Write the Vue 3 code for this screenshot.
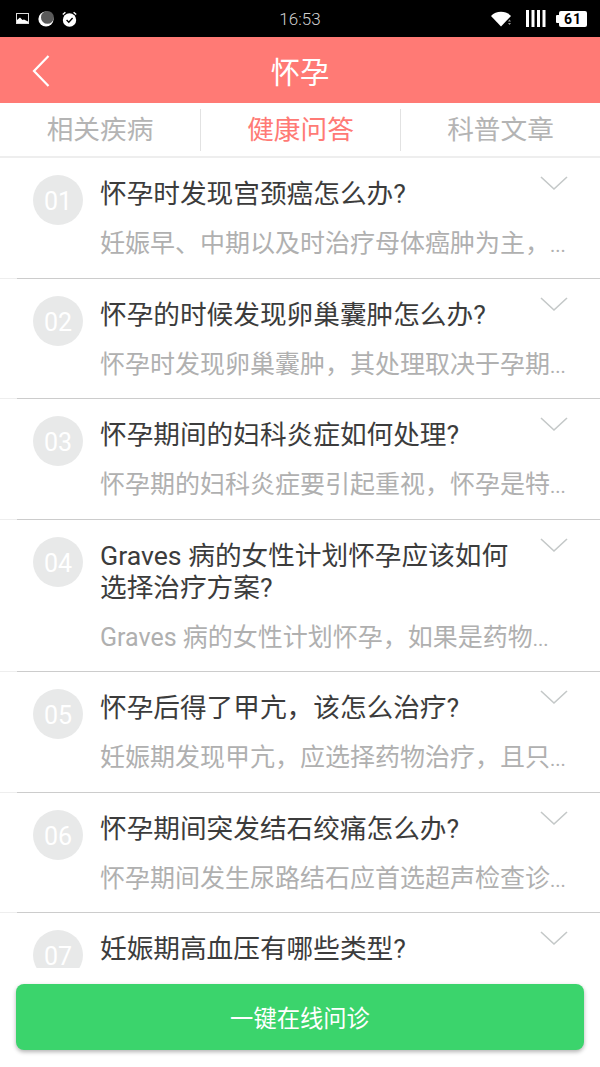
<script setup>
const tabs = [
  { name: '相关疾病', active: false },
  { name: '健康问答', active: true },
  { name: '科普文章', active: false }
]

// 07 has no summary: it sits behind the button in the screenshot
const questions = [
  { no: '01', title: '怀孕时发现宫颈癌怎么办?', desc: '妊娠早、中期以及时治疗母体癌肿为主，' },
  { no: '02', title: '怀孕的时候发现卵巢囊肿怎么办?', desc: '怀孕时发现卵巢囊肿，其处理取决于孕期' },
  { no: '03', title: '怀孕期间的妇科炎症如何处理?', desc: '怀孕期的妇科炎症要引起重视，怀孕是特' },
  { no: '04', title: 'Graves 病的女性计划怀孕应该如何选择治疗方案?', desc: 'Graves 病的女性计划怀孕，如果是药物' },
  { no: '05', title: '怀孕后得了甲亢，该怎么治疗?', desc: '妊娠期发现甲亢，应选择药物治疗，且只' },
  { no: '06', title: '怀孕期间突发结石绞痛怎么办?', desc: '怀孕期间发生尿路结石应首选超声检查诊' },
  { no: '07', title: '妊娠期高血压有哪些类型?', desc: '' }
]
</script>

<template>
  <div class="page">
    <div class="status">
      <div class="status-left">
        <svg width="14" height="12" viewBox="0 0 14 12">
          <rect x="0.5" y="0.5" width="12" height="10" fill="none" stroke="#ddd" />
          <path d="M1 10 L1 7 L4 4.500 L6.500 7 L8 6.500 L12 8.500 V10 Z" fill="#fff" />
        </svg>
        <svg width="16" height="16" viewBox="0 0 16 16">
          <circle cx="8" cy="8" r="7.600" fill="#fff" />
          <circle cx="9.400" cy="6.400" r="6.400" fill="#5a5a5a" />
        </svg>
        <svg width="15" height="16" viewBox="0 0 15 16">
          <circle cx="7.500" cy="9" r="6.700" fill="#fff" />
          <path d="M4.600 9 L6.800 11.200 L10.600 7" fill="none" stroke="#000" stroke-width="1.400" />
          <path d="M0.800 3.600 L3.400 1.200 M14.200 3.600 L11.600 1.200" stroke="#fff" stroke-width="1.400" />
        </svg>
      </div>
      <span class="time">16:53</span>
      <div class="status-right">
        <svg width="22" height="16" viewBox="0 0 22 16">
          <path d="M0 5 A14 14 0 0 1 20 5 L10 15.500 Z" fill="#fff" />
          <path d="M17 10.500h3l-1.500-2zM17 12h3l-1.500 2z" fill="#999" />
        </svg>
        <svg width="20" height="17" viewBox="0 0 20 17">
          <path d="M0 0h3v17H0zM5.500 0h3v17h-3zM11 0h3v17h-3zM16.500 0h3v17h-3z" fill="#fff" />
        </svg>
        <div class="battery"><span>61</span></div>
      </div>
    </div>

    <header class="top">
      <svg class="back" width="18" height="32" viewBox="0 0 18 32">
        <path d="M16.500 1 L2 16 L16.500 31" fill="none" stroke="#fff" stroke-width="2.200" />
      </svg>
      <h1>怀孕</h1>
    </header>

    <nav class="tabs">
      <div v-for="tab in tabs" :key="tab.name" class="tab" :class="{ active: tab.active }">{{ tab.name }}</div>
    </nav>

    <div class="list">
      <div v-for="q in questions" :key="q.no" class="item">
        <div class="num">{{ q.no }}</div>
        <div class="body">
          <div class="title">{{ q.title }}</div>
          <div v-if="q.desc" class="desc">{{ q.desc }}<span class="more">...</span></div>
        </div>
        <svg class="arrow" width="28" height="15" viewBox="0 0 28 15">
          <path d="M1 1 L14 13 L27 1" fill="none" stroke="#c4c8c8" stroke-width="1.600" />
        </svg>
      </div>
    </div>

    <div class="footer">
      <button class="ask">一键在线问诊</button>
    </div>
  </div>
</template>

<style>
html, body {
  margin: 0;
  background: #fff;
}
</style>

<style scoped>
.page {
  width: 600px;
  height: 1067px;
  display: flex;
  flex-direction: column;
  overflow: hidden;
  background: #fff;
  font-family: Roboto, "Noto Sans CJK SC", sans-serif;
}

.status {
  height: 37px;
  flex: none;
  background: #000;
  display: flex;
  align-items: center;
  justify-content: space-between;
  padding: 0 13px 0 16px;
  position: relative;
}
.status-left, .status-right {
  display: flex;
  align-items: center;
}
.status-left {
  gap: 8px;
}
.status-right {
  gap: 13px;
}
.time {
  position: absolute;
  left: 0;
  right: 0;
  text-align: center;
  color: #d0d0d0;
  font-size: 17px;
  font-weight: 300;
}
.battery {
  width: 28px;
  height: 16px;
  background: #fff;
  border-radius: 2px;
  position: relative;
  display: flex;
  align-items: center;
  justify-content: center;
}
.battery::before {
  content: "";
  position: absolute;
  left: -3px;
  top: 4px;
  width: 3px;
  height: 8px;
  background: #fff;
  border-radius: 1px 0 0 1px;
}
.battery span {
  color: #000;
  font-size: 14px;
  font-weight: 700;
  letter-spacing: 1px;
}

.top {
  height: 66px;
  flex: none;
  background: #ff7a75;
  display: flex;
  align-items: center;
  justify-content: center;
  position: relative;
}
.top h1 {
  margin: 0;
  color: #fff;
  font-size: 29.330px;
  font-weight: 400;
}
.back {
  position: absolute;
  left: 32px;
  top: 18px;
}

.tabs {
  height: 54px;
  flex: none;
  margin-top: 1px;
  box-sizing: border-box;
  display: grid;
  grid-template-columns: repeat(3, 1fr);
  align-items: center;
  border-bottom: 2px solid #eeeeee;
}
.tab {
  height: 42px;
  margin-top: -1px;
  line-height: 43px;
  text-align: center;
  font-size: 26.670px;
  color: #b4b4b4;
  border-left: 1px solid #e2e2e2;
}
.tab:first-child {
  border-left: none;
}
.tab.active {
  color: #ff7a75;
}

.list {
  flex: 1;
  overflow: hidden;
}
.item {
  position: relative;
  padding: 17px 0 16.4px 33px;
  min-height: 120.4px;
  box-sizing: border-box;
  display: flex;
  gap: 17px;
  border-bottom: 1px solid #eeeeee;
}
.item:first-child {
  padding-bottom: 17px;
  min-height: 121px;
}
.item::after {
  content: "";
  position: absolute;
  left: 17px;
  right: 0;
  bottom: -1px;
  height: 1px;
  background: #cccccc;
}
.num {
  width: 50px;
  height: 50px;
  flex: none;
  border-radius: 50%;
  background: #e8e9e9;
  color: #fff;
  font-size: 25px;
  line-height: 53px;
  text-align: center;
}
.body {
  flex: 1;
  min-width: 0;
  padding-right: 34px;
}
.title {
  padding-right: 50px;
  margin-top: 3px;
  color: #3c3c3c;
  font-size: 26.670px;
  line-height: 32px;
}
.desc {
  height: 34px;
  margin-top: 17px;
  color: #b0b0b0;
  font-size: 25px;
  line-height: 34px;
  white-space: nowrap;
}
.more {
  font-size: 20px;
  line-height: 1;
}
.arrow {
  position: absolute;
  right: 32px;
  top: 18px;
}

.footer {
  flex: none;
  height: 99px;
  box-sizing: border-box;
  padding: 16px 16px 17px;
}
.ask {
  display: block;
  width: 100%;
  height: 66px;
  border: none;
  border-radius: 8px;
  background: #3bd46c;
  color: #fff;
  font-family: inherit;
  font-size: 23.300px;
  box-shadow: 0 2px 4px rgba(0, 0, 0, 0.3);
}
</style>
